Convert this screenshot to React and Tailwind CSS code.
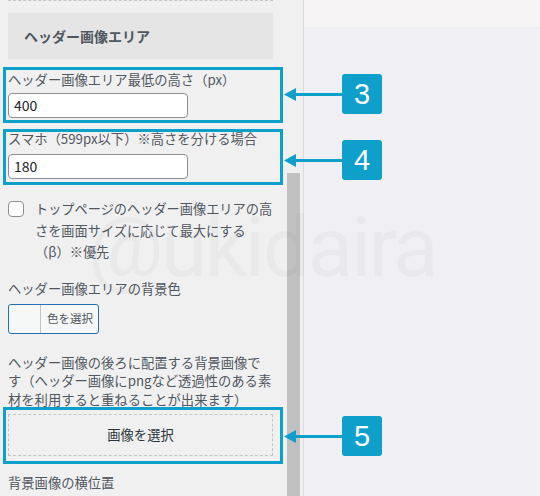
import React from "react";

const JP = { fontFamily: '"Noto Sans CJK JP", "Noto Sans", sans-serif' };

function Callout({ top, n }) {
  // top = y of arrow line center
  return (
    <div className="absolute left-[284px] flex items-center" style={{ top: top - 20 }}>
      <svg width="12" height="13" viewBox="0 0 12 13" className="shrink-0">
        <polygon points="0,6.5 12,0 12,13" fill="#0e9fcb" />
      </svg>
      <div className="w-[46px] h-[3px] bg-[#0e9fcb]" />
      <div className="w-[40px] h-[40px] rounded-[3px] bg-[#0e9fcb] flex items-center justify-center text-white text-[29px] leading-none font-['Liberation_Sans',sans-serif]">
        {n}
      </div>
    </div>
  );
}

export default function App() {
  return (
    <div
      className="relative w-[540px] h-[496px] overflow-hidden flex bg-[#f0eff3] text-[#50575e]"
      style={JP}
    >
      {/* left customizer panel */}
      <div className="relative w-[304px] h-full shrink-0 bg-[#f0f0f1] border-r border-[#dcdcde]">
        <div className="ml-[8px] w-[265px] flex flex-col">
          <div className="border-t border-dashed border-[#c3c4c7]" />
          <div className="mt-[12px] h-[46px] bg-[#e5e5e5] flex items-center pl-[16px] text-[14px] font-bold text-[#50575e]">
            ヘッダー画像エリア
          </div>
          <div className="mt-[12px] text-[13.3px] leading-[18px] whitespace-nowrap">
            ヘッダー画像エリア最低の高さ（px）
          </div>
          <div className="mt-[4px] w-[180px] h-[25px] bg-white border border-[#8c8f94] rounded-[4px] flex items-center pl-[5px] text-[14px] text-[#1d2327]">
            400
          </div>
          <div className="mt-[12px] text-[13.3px] leading-[18px] whitespace-nowrap">
            スマホ（599px以下）※高さを分ける場合
          </div>
          <div className="mt-[6px] w-[180px] h-[25px] bg-white border border-[#8c8f94] rounded-[4px] flex items-center pl-[5px] text-[14px] text-[#1d2327]">
            180
          </div>
          <div className="mt-[19px] flex">
            <div className="mt-[3px] w-[16px] h-[16px] shrink-0 bg-white border border-[#8c8f94] rounded-[4px]" />
            <div className="ml-[11px] text-[13.2px] leading-[21.5px] whitespace-nowrap">
              トップページのヘッダー画像エリアの高
              <br />
              さを画面サイズに応じて最大にする
              <br />
              （β）※優先
            </div>
          </div>
          <div className="mt-[17px] text-[13.3px] leading-[18px] whitespace-nowrap">
            ヘッダー画像エリアの背景色
          </div>
          <div className="mt-[6px] w-[91px] h-[30px] flex border border-[#2271b1] rounded-[3px] overflow-hidden bg-[#f6f7f7]">
            <div className="w-[31px] h-full" />
            <div className="flex-1 border-l border-[#c3c4c7] flex items-center pl-[6px] text-[11.5px] text-[#50575e]">
              色を選択
            </div>
          </div>
          <div className="mt-[20px] text-[13.3px] leading-[18.5px] whitespace-nowrap">
            ヘッダー画像の後ろに配置する背景画像で
            <br />
            す（ヘッダー画像にpngなど透過性のある素
            <br />
            材を利用すると重ねることが出来ます）
          </div>
          <div className="mt-[5px] h-[42px] border border-dashed border-[#c3c4c7] flex items-center justify-center text-[13.3px] text-[#2c3338]">
            画像を選択
          </div>
          <div className="mt-[18px] text-[13.3px] leading-[18px] whitespace-nowrap">
            背景画像の横位置
          </div>
        </div>
        {/* scrollbar thumb */}
        <div className="absolute left-[287px] top-[173px] w-[13px] h-[340px] bg-[#c1c1c1]" />
      </div>

      {/* right preview area */}
      <div className="flex-1 flex flex-col">
        <div className="h-[27px] bg-[#f6f4f4]" />
        <div className="flex-1" />
      </div>

      {/* annotation boxes */}
      <div className="absolute left-[3px] top-[67px] w-[280px] h-[56px] border-[3px] border-[#0e9fcb]" />
      <div className="absolute left-[3px] top-[129px] w-[280px] h-[56px] border-[3px] border-[#0e9fcb]" />
      <div className="absolute left-[3px] top-[407px] w-[280px] h-[57px] border-[3px] border-[#0e9fcb]" />

      <Callout top={94} n="3" />
      <Callout top={160} n="4" />
      <Callout top={436} n="5" />

      {/* watermark */}
      <div className="pointer-events-none absolute left-[88px] top-[206px] text-[84px] leading-none tracking-[-2.5px] text-[rgba(0,0,0,0.026)] whitespace-nowrap font-['Roboto',sans-serif]">
        @ukidaira
      </div>
    </div>
  );
}
